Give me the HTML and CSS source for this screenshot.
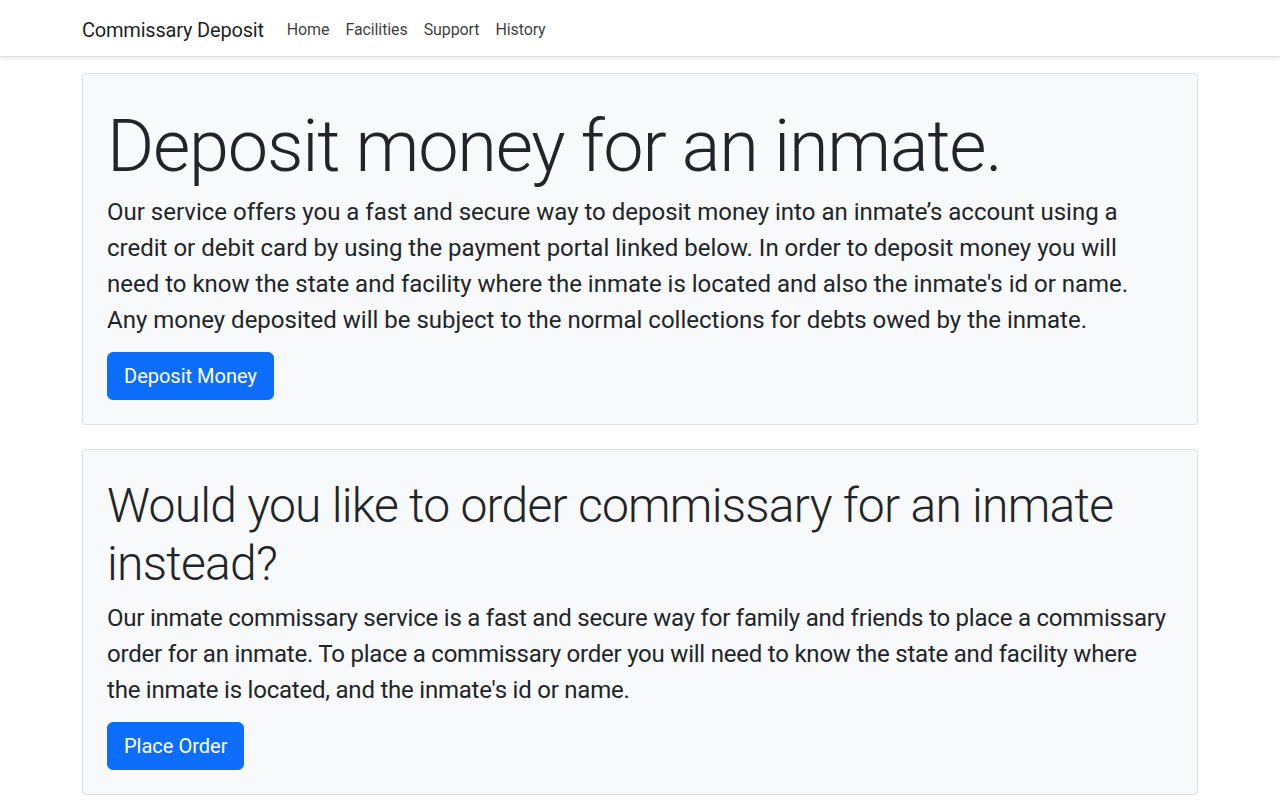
FILE: index.html
```html
<!DOCTYPE html>
<html lang="en">
<head>
<meta charset="utf-8">
<title>Commissary Deposit</title>
<link rel="stylesheet" href="styles.css">
</head>
<body>
<header class="navbar">
  <div class="container nav-inner">
    <a class="brand" href="#">Commissary Deposit</a>
    <nav class="nav-links">
      <a href="#">Home</a>
      <a href="#">Facilities</a>
      <a href="#">Support</a>
      <a href="#">History</a>
    </nav>
  </div>
</header>
<main class="container main">
  <section class="card">
    <h1 class="display-2">Deposit money for an inmate.</h1>
    <p class="lead-text">Our service offers you a fast and secure way to deposit money into an inmate’s account using a<br>credit or debit card by using the payment portal linked below. In order to deposit money you will<br>need to know the state and facility where the inmate is located and also the inmate's id or name.<br>Any money deposited will be subject to the normal collections for debts owed by the inmate.</p>
    <a class="btn" href="#">Deposit Money</a>
  </section>
  <section class="card">
    <h1 class="display-5">Would you like to order commissary for an inmate instead?</h1>
    <p class="lead-text tight">Our inmate commissary service is a fast and secure way for family and friends to place a commissary<br>order for an inmate. To place a commissary order you will need to know the state and facility where<br>the inmate is located, and the inmate's id or name.</p>
    <a class="btn" href="#">Place Order</a>
  </section>
</main>
</body>
</html>
```
FILE: styles.css
```css
* { box-sizing: border-box; }
html, body { margin: 0; padding: 0; }
body {
  font-family: "Segoe UI", Roboto, "Noto Sans", "Liberation Sans", sans-serif;
  font-size: 16px;
  line-height: 1.5;
  color: #212529;
  background: #fff;
}
.container {
  width: 1140px;
  margin: 0 auto;
  padding: 0 12px;
}
.navbar {
  background: #fff;
  border-bottom: 1px solid #dee2e6;
  box-shadow: 0 2px 4px rgba(0,0,0,0.075);
  height: 57px;
}
.nav-inner {
  display: flex;
  align-items: center;
  height: 56px;
  padding-top: 3px;
}
.brand {
  font-size: 20px;
  letter-spacing: -0.2px;
  color: rgba(0,0,0,0.9);
  text-decoration: none;
  margin-right: 15px;
  padding: 5px 0;
}
.nav-links { display: flex; }
.nav-links a {
  color: rgba(0,0,0,0.78);
  text-decoration: none;
  font-size: 16px;
  letter-spacing: -0.1px;
  padding: 8px 8px;
}
.main { padding-top: 16px; }
.card {
  background: #f8f9fa;
  border: 1px solid #dfe1e3;
  border-radius: 4px;
  padding: 24px;
  margin-bottom: 24px;
}
h1 { font-weight: 300; line-height: 1.2; }
.display-2 {
  font-size: 72px;
  letter-spacing: -1.2px;
  margin: 0 0 2px;
  padding-top: 6px;
}
.display-5 {
  font-size: 48px;
  letter-spacing: -0.75px;
  margin: 0 0 5px;
  padding-top: 3px;
}
.lead-text {
  font-size: 24px;
  line-height: 1.5;
  padding-top: 2px;
  margin: 0 0 14px;
  white-space: nowrap;
}
.tight { letter-spacing: -0.22px; }
.btn {
  display: inline-block;
  background: #0d6efd;
  color: #fff;
  text-decoration: none;
  font-size: 20px;
  line-height: 30px;
  padding: 8px 16px;
  border: 1px solid #0d6efd;
  border-radius: 6px;
}
```
